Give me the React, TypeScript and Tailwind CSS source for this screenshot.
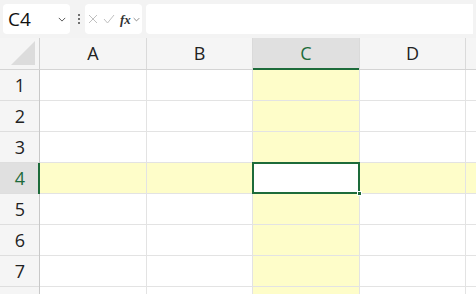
import React from 'react';

const cols = [
  { id: 'A', w: 'w-[107px]' },
  { id: 'B', w: 'w-[106px]' },
  { id: 'C', w: 'w-[107px]' },
  { id: 'D', w: 'w-[106px]' },
];
const rows = [1, 2, 3, 4, 5, 6, 7, 8];
const activeCol = 'C';
const activeRow = 4;

const Chevron: React.FC<{ className?: string }> = ({ className }) => (
  <svg viewBox="0 0 10 6" className={className} fill="none" stroke="currentColor" strokeWidth="1.2">
    <path d="M1 1l4 4 4-4" />
  </svg>
);

const Toolbar: React.FC = () => (
  <div className="h-[38px] flex items-center px-[3px] bg-[#f3f3f3]">
    <div className="w-[67px] h-[30px] bg-white rounded-[4px] flex items-center justify-between pl-[5px] pr-[4px]">
      <span className="text-[19px] text-[#111]">C4</span>
      <Chevron className="w-[8px] h-[5px] text-[#555]" />
    </div>
    <div className="w-[7px] ml-[5px] mr-[3px] flex flex-col items-center gap-[2px]">
      <span className="w-[2px] h-[2px] bg-[#444] rounded-full" />
      <span className="w-[2px] h-[2px] bg-[#444] rounded-full" />
      <span className="w-[2px] h-[2px] bg-[#444] rounded-full" />
    </div>
    <div className="w-[57px] h-[30px] bg-white rounded-[4px] flex items-center pl-[3px]">
      <svg viewBox="0 0 10 10" className="w-[10px] h-[10px]" fill="none" stroke="#c0c0c0" strokeWidth="1">
        <path d="M1 1l8 8M9 1l-8 8" />
      </svg>
      <svg viewBox="0 0 12 10" className="w-[12px] h-[10px] ml-[5px]" fill="none" stroke="#c0c0c0" strokeWidth="1">
        <path d="M1 5l3.5 4L11 1" />
      </svg>
      <span className="ml-[5px] text-[13px] leading-none italic font-bold text-[#333]" style={{ fontFamily: '"Liberation Serif", serif' }}>fx</span>
      <Chevron className="ml-[2px] w-[7px] h-[5px] text-[#777]" />
    </div>
    <div className="flex-1 ml-[4px] h-[30px] bg-white rounded-l-[4px]" />
  </div>
);

export default function App() {
  return (
    <div className="w-[476px] h-[294px] overflow-hidden bg-white" style={{ fontFamily: '"Open Sans", "Liberation Sans", sans-serif' }}>
      <Toolbar />
      <div className="flex h-[32px] bg-[#f5f5f5] border-b border-[#d4d4d4]">
        <div className="w-[40px] shrink-0 border-r border-[#d0d0d0] relative">
          <div
            className="absolute right-[4px] bottom-[4px] w-[24px] h-[24px] bg-[#dcdcdc]"
            style={{ clipPath: 'polygon(100% 0, 100% 100%, 0 100%)' }}
          />
        </div>
        {cols.map(c => (
          <div
            key={c.id}
            className={`${c.w} shrink-0 border-r border-[#dadada] flex items-center justify-center text-[18px] relative ${
              c.id === activeCol ? 'bg-[#e0e0e0] text-[#1d6b3a]' : 'text-[#222]'
            }`}
          >
            {c.id}
            {c.id === activeCol && <div className="absolute left-0 right-0 bottom-[-1px] h-[2px] bg-[#1d6b3a]" />}
          </div>
        ))}
        <div className="flex-1" />
      </div>
      {rows.map(r => {
        const rowActive = r === activeRow;
        const last = r === rows.length;
        return (
          <div key={r} className="flex h-[31px]">
            <div
              className={`w-[40px] shrink-0 border-b border-[#dedede] flex items-center justify-center text-[18px] relative ${
                rowActive ? 'bg-[#e0e0e0] text-[#1d6b3a]' : 'bg-[#f5f5f5] text-[#222]'
              }`}
            >
              {!last && r}
              <div className={`absolute top-0 bottom-[-1px] right-0 ${rowActive ? 'w-[2px] bg-[#1d6b3a]' : 'w-[1px] bg-[#c8c8c8]'}`} />
            </div>
            {cols.map(c => {
              const isActive = rowActive && c.id === activeCol;
              const hl = rowActive || c.id === activeCol;
              return (
                <div
                  key={c.id}
                  className={`${c.w} shrink-0 border-r border-b border-[#e3e3e3] relative ${
                    isActive ? 'bg-white' : hl ? 'bg-[#fefdc9]' : 'bg-white'
                  }`}
                >
                  {isActive && (
                    <div className="absolute left-[-1px] top-[-1px] right-[-1px] bottom-[-1px] border-2 border-[#1d6b3a] z-10">
                      <div className="absolute right-[-4px] bottom-[-4px] w-[5px] h-[5px] bg-[#1d6b3a] border border-white" />
                    </div>
                  )}
                </div>
              );
            })}
            <div className={`flex-1 border-b border-[#e3e3e3] ${rowActive ? 'bg-[#fefdc9]' : 'bg-white'}`} />
          </div>
        );
      })}
    </div>
  );
}
